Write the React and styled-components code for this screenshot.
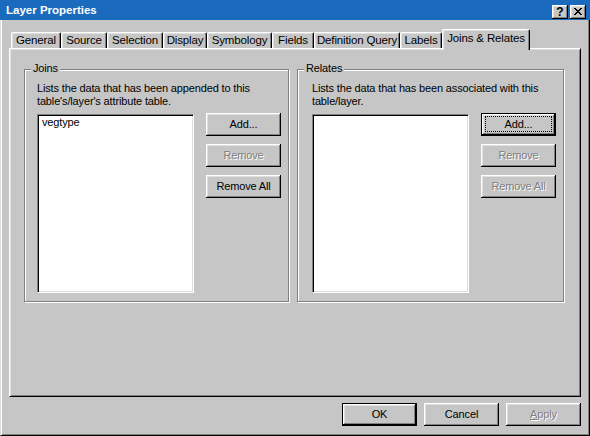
import React from 'react';
import styled, { createGlobalStyle, css } from 'styled-components';

const FACE = '#c6c6c6';

const Global = createGlobalStyle`
  html, body { margin: 0; padding: 0; background: ${FACE}; }
  body { font-family: "Liberation Sans", Arial, sans-serif; font-size: 11px; }
  * { box-sizing: border-box; }
`;

const raised = css`
  box-shadow: inset -1px -1px #000, inset 1px 1px #fff, inset -2px -2px #808080, inset 2px 2px #dfdfdf;
`;

const Window = styled.div`
  width: 590px;
  height: 436px;
  display: flex;
  flex-direction: column;
  background: ${FACE};
  color: #000;
  font-family: "Liberation Sans", Arial, sans-serif;
  font-size: 11px;
  letter-spacing: -0.15px;
`;

const TitleBar = styled.div`
  height: 20px;
  flex-shrink: 0;
  background: #1a6bbd;
  display: flex;
  align-items: flex-start;
  padding: 0 4px 0 6px;
`;

const Title = styled.div`
  flex: 1;
  color: #fff;
  font-weight: bold;
  font-size: 11.5px;
  line-height: 21px;
  letter-spacing: 0;
`;

const CaptionButtons = styled.div`
  display: flex;
  gap: 2px;
  margin-top: 5px;
`;

const CaptionButton = styled.div`
  width: 16px;
  height: 14px;
  background: ${FACE};
  ${raised};
  display: flex;
  align-items: center;
  justify-content: center;
  font-weight: bold;
  font-size: 12px;
  line-height: 1;
  letter-spacing: 0;
  padding-bottom: 1px;
`;

const Body = styled.div`
  flex: 1;
  display: flex;
  flex-direction: column;
  padding: 9px 8px 9px 8px;
  border-left: 1px solid #dfdfdf;
  border-right: 1px solid #000;
  border-bottom: 1px solid #000;
  box-shadow: inset 1px 0 #fff, inset -1px -1px #808080;
`;

const TabStrip = styled.div`
  height: 19px;
  display: flex;
  align-items: flex-end;
  margin-left: 2px;
`;

const Tab = styled.div`
  position: relative;
  z-index: ${p => (p.$active ? 2 : 1)};
  width: ${p => p.$w}px;
  height: ${p => (p.$active ? 21 : 16)}px;
  margin-bottom: ${p => (p.$active ? -2 : 0)}px;
  padding-bottom: ${p => (p.$active ? 3 : 0)}px;
  background: ${FACE};
  border-top: 1px solid #fff;
  border-left: 1px solid #fff;
  border-right: 1px solid #000;
  border-radius: 2px 2px 0 0;
  box-shadow: inset -1px 0 #808080, inset 1px 1px #dfdfdf;
  display: flex;
  align-items: center;
  justify-content: center;
  white-space: nowrap;
  line-height: 13px;
  font-size: 11.5px;
`;

const Panel = styled.div`
  flex: 1;
  display: flex;
  align-items: flex-start;
  gap: 8px;
  border-top: 1px solid #fff;
  border-left: 1px solid #fff;
  border-right: 1px solid #000;
  border-bottom: 1px solid #000;
  box-shadow: inset 1px 1px #dfdfdf, inset -1px -1px #808080;
  padding: 20px 16px 0 14px;
`;

const Group = styled.div`
  flex: 1 1 0;
  min-width: 0;
  position: relative;
  border: 1px solid #808080;
  box-shadow: 1px 1px 0 #fff, inset 1px 1px 0 #fff;
  padding: 12px 7px 8px ${p => p.$pl}px;
`;

const Legend = styled.span`
  position: absolute;
  top: -8px;
  left: 6px;
  padding: 0 2px;
  background: ${FACE};
  line-height: 13px;
`;

const Description = styled.div`
  line-height: 13px;
  white-space: nowrap;
`;

const Row = styled.div`
  display: flex;
  align-items: flex-start;
  gap: 12px;
  margin-top: 5px;
`;

const ListBox = styled.div`
  flex: 1;
  height: 179px;
  margin-top: 1px;
  background: #fff;
  border-top: 1px solid #808080;
  border-left: 1px solid #808080;
  border-right: 1px solid #fff;
  border-bottom: 1px solid #fff;
  box-shadow: inset 1px 1px #000, inset -1px -1px #dfdfdf;
  padding: 1px 4px;
  line-height: 13px;
`;

const ButtonColumn = styled.div`
  width: 75px;
  display: flex;
  flex-direction: column;
  gap: 8px;
`;

const Button = styled.button`
  position: relative;
  width: 75px;
  height: 23px;
  margin: 0;
  padding: 0;
  border: none;
  background: ${FACE};
  font: inherit;
  letter-spacing: inherit;
  color: #000;
  line-height: 13px;
  ${raised};
  ${p =>
    p.$default &&
    css`
      box-shadow: inset 0 0 0 1px #000, inset -2px -2px #000, inset 2px 2px #fff,
        inset -3px -3px #808080, inset 3px 3px #dfdfdf;
    `}
  ${p =>
    p.disabled &&
    css`
      color: #808080;
      text-shadow: 1px 1px 0 #fff;
    `}
  ${p =>
    p.$focused &&
    css`
      &::after {
        content: '';
        position: absolute;
        top: 3px;
        bottom: 4px;
        left: 4px;
        right: 4px;
        border: 1px dotted #000;
      }
    `}
`;

const Footer = styled.div`
  display: flex;
  justify-content: flex-end;
  gap: 7px;
  margin-top: 6px;
`;

const CloseGlyph = () => {
  const rects = [];
  for (let i = 0; i < 7; i++) {
    rects.push(<rect key={`a${i}`} x={i} y={i} width={2} height={1} />);
    rects.push(<rect key={`b${i}`} x={6 - i} y={i} width={2} height={1} />);
  }
  return (
    <svg width="8" height="7" viewBox="0 0 8 7" fill="#000" shapeRendering="crispEdges">
      {rects}
    </svg>
  );
};

const tabs = [
  ['General', 50],
  ['Source', 46],
  ['Selection', 56],
  ['Display', 44],
  ['Symbology', 65],
  ['Fields', 42],
  ['Definition Query', 86],
  ['Labels', 42],
  ['Joins & Relates', 88, true],
];

export default function App() {
  return (
    <>
      <Global />
      <Window>
        <TitleBar>
          <Title>Layer Properties</Title>
          <CaptionButtons>
            <CaptionButton>?</CaptionButton>
            <CaptionButton>
              <CloseGlyph />
            </CaptionButton>
          </CaptionButtons>
        </TitleBar>
        <Body>
          <TabStrip>
            {tabs.map(([label, w, active]) => (
              <Tab key={label} $w={w} $active={active}>
                {label}
              </Tab>
            ))}
          </TabStrip>
          <Panel>
            <Group $pl={12}>
              <Legend>Joins</Legend>
              <Description>
                Lists the data that has been appended to this
                <br />
                table's/layer's attribute table.
              </Description>
              <Row>
                <ListBox>vegtype</ListBox>
                <ButtonColumn>
                  <Button>Add...</Button>
                  <Button disabled>Remove</Button>
                  <Button>Remove All</Button>
                </ButtonColumn>
              </Row>
            </Group>
            <Group $pl={14}>
              <Legend>Relates</Legend>
              <Description>
                Lists the data that has been associated with this
                <br />
                table/layer.
              </Description>
              <Row>
                <ListBox />
                <ButtonColumn>
                  <Button $default $focused>
                    Add...
                  </Button>
                  <Button disabled>Remove</Button>
                  <Button disabled>Remove All</Button>
                </ButtonColumn>
              </Row>
            </Group>
          </Panel>
          <Footer>
            <Button $default>OK</Button>
            <Button>Cancel</Button>
            <Button disabled>
              <u>A</u>pply
            </Button>
          </Footer>
        </Body>
      </Window>
    </>
  );
}
